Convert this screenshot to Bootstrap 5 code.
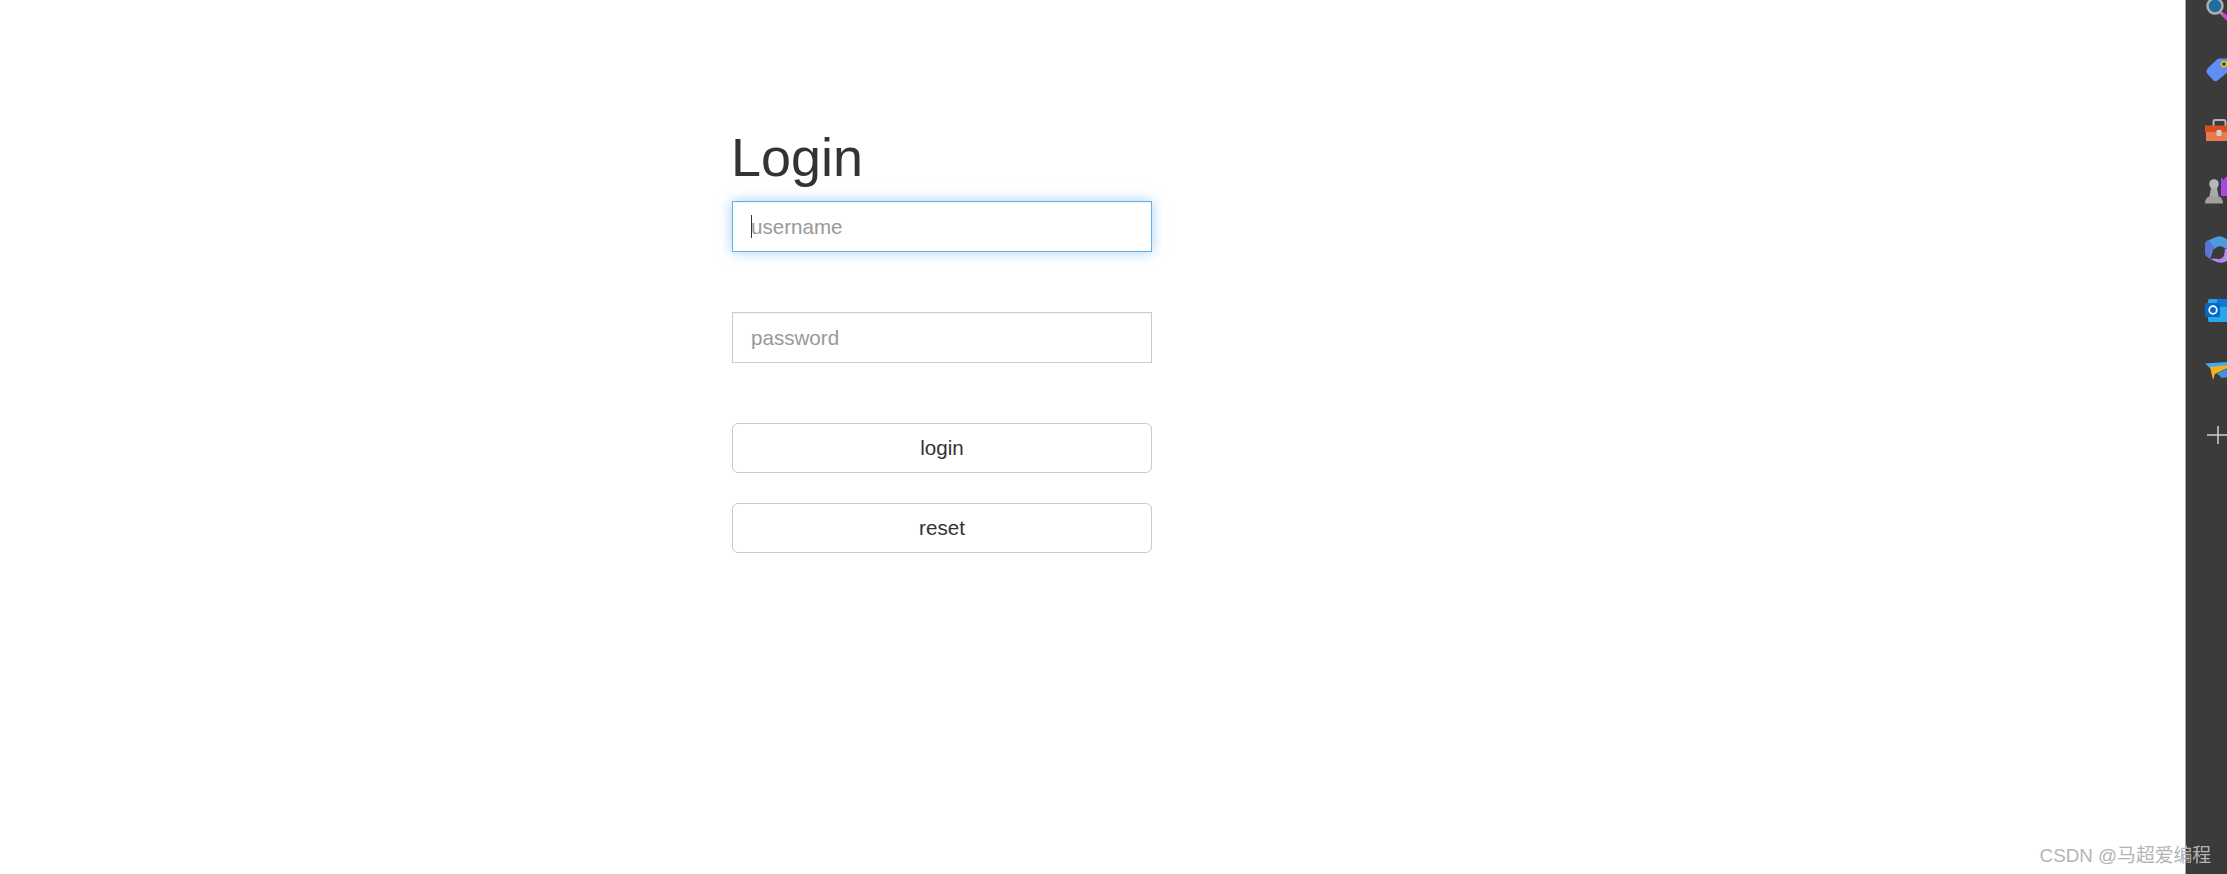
<!doctype html>
<html lang="en">
<head>
<meta charset="utf-8">
<title>Login</title>
<link href="https://cdn.jsdelivr.net/npm/bootstrap@5.3.0/dist/css/bootstrap.min.css" rel="stylesheet">
<style>
html,body{height:100%;overflow:hidden;background:#fff}
body{font-family:"Liberation Sans",Arial,sans-serif;color:#333}
.shell{height:874px;position:relative}
.work{padding:125px 0 0 732px;min-width:0}
.login-box{width:420px}
.login-title{font-family:"Liberation Sans",Arial,sans-serif;font-size:53.9px;font-weight:400;line-height:1.1;color:#333;margin:0 0 17px -1px;height:59px;padding-top:3px}
.field-wrap{margin-bottom:60px}
.login-input.form-control{height:51px;border:1.5px solid #ccc;border-radius:0;font-size:20.6px;padding:1px 18px 0;color:#555;box-shadow:inset 0 1px 1px rgba(0,0,0,.04)}
.login-input.form-control::placeholder{color:#999;opacity:1}
.login-input.is-focus{border-color:#66afe9;box-shadow:inset 0 1px 1px rgba(0,0,0,.05),0 0 12px rgba(102,175,233,.6)}
.caret-mark{position:absolute;left:19px;top:14px;width:1px;height:23px;background:#333}
.login-btn.btn{display:block;width:100%;height:50px;background:#fff;border:1.5px solid #ccc;border-radius:6px;font-size:20.6px;line-height:1;color:#333;padding:0}
.login-btn + .login-btn{margin-top:30px}
.side-rail{width:42px;background:#3b3b3b;border-left:1px solid #a8a8a8;overflow:hidden;padding-left:19px}
.rail-icon{display:block;flex:none;width:30px;height:60px}
.rail-first{height:40px}
.rail-plus{height:60px;margin-top:5px}
.mark-text{position:absolute;right:16px;bottom:6px;font-family:"Liberation Sans","Noto Sans CJK SC",sans-serif;font-size:18.8px;line-height:24px;color:#b4b4b4;white-space:nowrap}
</style>
</head>
<body>
<div class="shell d-flex">
  <main class="work flex-grow-1">
    <form class="login-box">
      <h1 class="login-title">Login</h1>
      <div class="field-wrap position-relative">
        <input class="form-control login-input is-focus" type="text" placeholder="username">
        <span class="caret-mark"></span>
      </div>
      <div class="field-wrap">
        <input class="form-control login-input" type="password" placeholder="password">
      </div>
      <button class="btn login-btn" type="button">login</button>
      <button class="btn login-btn" type="reset">reset</button>
    </form>
  </main>
  <aside class="side-rail d-flex flex-column flex-shrink-0">
    <svg class="rail-icon rail-first" viewBox="0 0 30 40">
      <circle cx="10" cy="6" r="7.500" fill="#1d6e9e" stroke="#b0b0b0" stroke-width="2.500"/>
      <path d="M15.500 12.500l2.500 2" stroke="#9a9a9a" stroke-width="3"/>
      <path d="M18 14.500l8 7" stroke="#d63fe8" stroke-width="4"/>
    </svg>
    <svg class="rail-icon" viewBox="0 0 30 60">
      <path d="M2.500 28.500 12 19.500q1-1 2.500-1H30v7.500L12.500 40.500q-2 1.500-4 0l-6-6.500q-2-2.500 0-5.500z" fill="#5f8ff5"/>
      <circle cx="19" cy="24" r="2.600" fill="#3b3b3b" stroke="#f2c811" stroke-width="1.500"/>
    </svg>
    <svg class="rail-icon" viewBox="0 0 30 60">
      <path d="M8.500 26v-4a2 2 0 0 1 2-2h8a2 2 0 0 1 2 2v4" fill="none" stroke="#b5b5b5" stroke-width="2"/>
      <rect x="0" y="25.500" width="30" height="7" fill="#d4501f"/>
      <rect x="1" y="32" width="29" height="9" fill="#ea7a4c"/>
      <rect x="11.500" y="30" width="5" height="6" rx="1" fill="#cfcfcf"/>
    </svg>
    <svg class="rail-icon" viewBox="0 0 30 60">
      <path d="M16 36V17l2.500 3 2.500-3 2.500 2 3-2v19z" fill="#a648e8"/>
      <rect x="20" y="17" width="10" height="19" fill="#a648e8"/>
      <circle cx="9" cy="24" r="4.800" fill="#b8b8b8"/>
      <path d="M6 28h6l1.500 8h-9z" fill="#ababab"/>
      <path d="M0 43.500q0-6 5-7.500h8q5 1.500 5 7.500z" fill="#a0a0a0"/>
    </svg>
    <svg class="rail-icon" viewBox="0 0 30 60">
      <path d="M0 25q0-3 3-4.500l8-3.500q4-1.500 8 .5l11 6v5H20q-3-3-7-2l-5 3-2 7-1 2-4-3q-1-2-1-4z" fill="#4d9bdc"/>
      <path d="M0 25q0-3 3-4.500L10 28l-4 3-1 8-4-3q-1-2-1-4z" fill="#5d72d8"/>
      <path d="M5 39q5-1 8 0 3 1 6-3l1-7h10v4l-8 8q-5 3-10 1l-7-3z" fill="#b48ae8"/>
    </svg>
    <svg class="rail-icon" viewBox="0 0 30 60">
      <rect x="3" y="19" width="27" height="23" rx="2" fill="#28a8ea"/>
      <rect x="12" y="19" width="18" height="8" fill="#0f78d4"/>
      <rect x="0" y="23" width="15" height="14" rx="1.500" fill="#0369c4"/>
      <circle cx="8" cy="30" r="3.800" fill="none" stroke="#fff" stroke-width="1.800"/>
    </svg>
    <svg class="rail-icon" viewBox="0 0 30 60">
      <path d="M0 23.500 30 21.500v3.500L6 29z" fill="#43a9f2"/>
      <path d="M5 27 30 24.500 10 34l-2 6z" fill="#f4b21a"/>
      <path d="M12 33.500 30 25v13l-7-1-6 1z" fill="#3f93e6"/>
    </svg>
    <svg class="rail-icon rail-plus" viewBox="0 0 30 60">
      <path d="M2 30h28M13 21v18" stroke="#d0d0d0" stroke-width="1.500" fill="none"/>
    </svg>
  </aside>
  <div class="mark-text">CSDN @马超爱编程</div>
</div>
<script src="https://cdn.jsdelivr.net/npm/bootstrap@5.3.0/dist/js/bootstrap.bundle.min.js"></script>
</body>
</html>
